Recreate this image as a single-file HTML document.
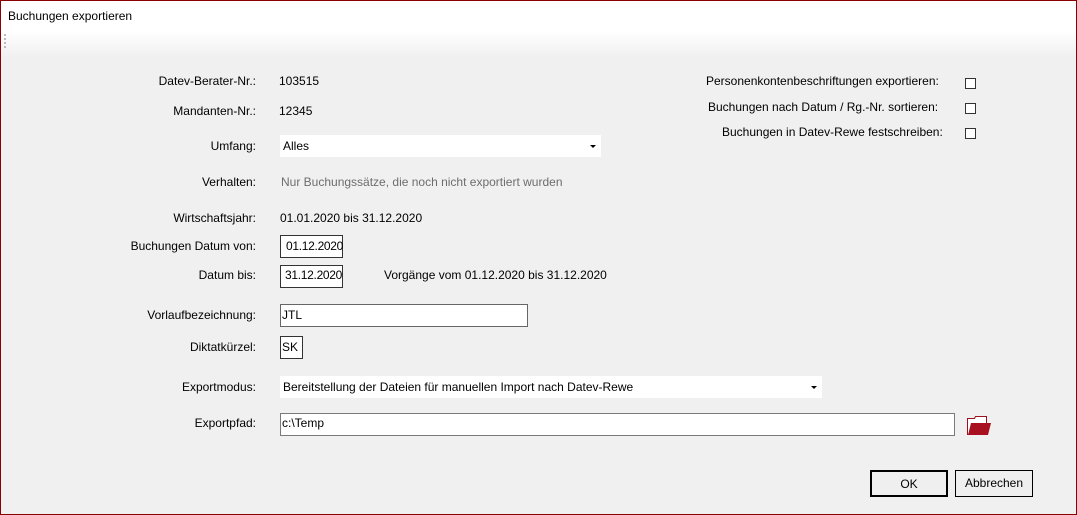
<!DOCTYPE html><html><head><style>
body{margin:0;width:1077px;height:515px;overflow:hidden;font-family:"Liberation Sans",sans-serif;font-size:12px;color:#000;position:relative;background:#f0f0f0}
#bd{position:absolute;left:0;top:0;width:1075px;height:513px;border:1px solid #8b0000;z-index:9}
.t{position:absolute;white-space:nowrap;line-height:14px}
.r{text-align:right;width:256px;left:0}
.b{position:absolute;background:#fff;box-sizing:border-box}
.cb{position:absolute;width:11px;height:11px;border:1px solid #333;background:#fff;box-sizing:border-box;left:965px}
.btn{position:absolute;top:470px;height:27px;box-sizing:border-box;text-align:center;line-height:24px;background:#efefef}
.ar{position:absolute;width:0;height:0;border-left:3px solid transparent;border-right:3px solid transparent;border-top:3px solid #000}
</style></head><body>
<div id="bd"></div>
<div style="position:absolute;left:0;top:0;width:1077px;height:31px;background:#fff"></div>
<div style="position:absolute;left:0;top:31px;width:1077px;height:26px;background:linear-gradient(#fff,#f0f0f0)"></div>
<div style="position:absolute;left:4px;top:34px;width:2px;height:15px;background:repeating-linear-gradient(#bbb 0 2px,transparent 2px 4px)"></div>
<div class="t" style="left:8px;top:9px">Buchungen exportieren</div>

<div class="t r" style="top:74px">Datev-Berater-Nr.:</div><div class="t" style="left:279px;top:74px">103515</div>
<div class="t r" style="top:104px">Mandanten-Nr.:</div><div class="t" style="left:279px;top:104px">12345</div>
<div class="t r" style="top:139px">Umfang:</div>
<div class="b" style="left:280px;top:135px;width:321px;height:22px"></div>
<div class="t" style="left:283px;top:139px">Alles</div>
<div class="ar" style="left:590px;top:145px"></div>
<div class="t r" style="top:175px">Verhalten:</div><div class="t" style="left:281px;top:175px;color:#6d6d6d">Nur Buchungssätze, die noch nicht exportiert wurden</div>
<div class="t r" style="top:211px">Wirtschaftsjahr:</div><div class="t" style="left:280px;top:211px">01.01.2020 bis 31.12.2020</div>
<div class="t r" style="top:239px">Buchungen Datum von:</div>
<div class="b" style="left:280px;top:235px;width:63px;height:23px;border:1px solid #333"></div><div class="t" style="left:286px;top:239px;letter-spacing:-0.3px">01.12.2020</div>
<div class="t r" style="top:268px">Datum bis:</div>
<div class="b" style="left:280px;top:265px;width:63px;height:23px;border:1px solid #333"></div><div class="t" style="left:285px;top:268px;letter-spacing:-0.3px">31.12.2020</div>
<div class="t" style="left:384px;top:268px">Vorgänge vom 01.12.2020 bis 31.12.2020</div>
<div class="t r" style="top:308px">Vorlaufbezeichnung:</div>
<div class="b" style="left:280px;top:304px;width:248px;height:23px;border:1px solid #666"></div><div class="t" style="left:282px;top:308px">JTL</div>
<div class="t r" style="top:340px">Diktatkürzel:</div>
<div class="b" style="left:280px;top:336px;width:23px;height:23px;border:1px solid #333"></div><div class="t" style="left:282px;top:340px">SK</div>
<div class="t r" style="top:380px">Exportmodus:</div>
<div class="b" style="left:280px;top:376px;width:542px;height:22px"></div>
<div class="t" style="left:283px;top:380px">Bereitstellung der Dateien für manuellen Import nach Datev-Rewe</div>
<div class="ar" style="left:811px;top:386px"></div>
<div class="t r" style="top:416px">Exportpfad:</div>
<div class="b" style="left:280px;top:413px;width:675px;height:23px;border:1px solid #7a7a7a"></div><div class="t" style="left:282px;top:416px">c:\Temp</div>
<svg style="position:absolute;left:966px;top:414px" width="27" height="22"><path d="M1.5 20.5V4.5h7l1-2h11v18z" fill="#fff" stroke="#9e1020"/><path d="M2 21l3-12h20l-3 12z" fill="#a8101f"/></svg>
<div class="t" style="left:706px;top:74px">Personenkontenbeschriftungen exportieren:</div>
<div class="t" style="left:708px;top:100px">Buchungen nach Datum / Rg.-Nr. sortieren:</div>
<div class="t" style="left:722px;top:125px">Buchungen in Datev-Rewe festschreiben:</div>
<div class="cb" style="top:78px"></div><div class="cb" style="top:103px"></div><div class="cb" style="top:128px"></div>
<div class="btn" style="left:870px;width:78px;border:2px solid #000">OK</div>
<div class="btn" style="left:955px;width:78px;border:1px solid #000;line-height:25px">Abbrechen</div>
</body></html>
